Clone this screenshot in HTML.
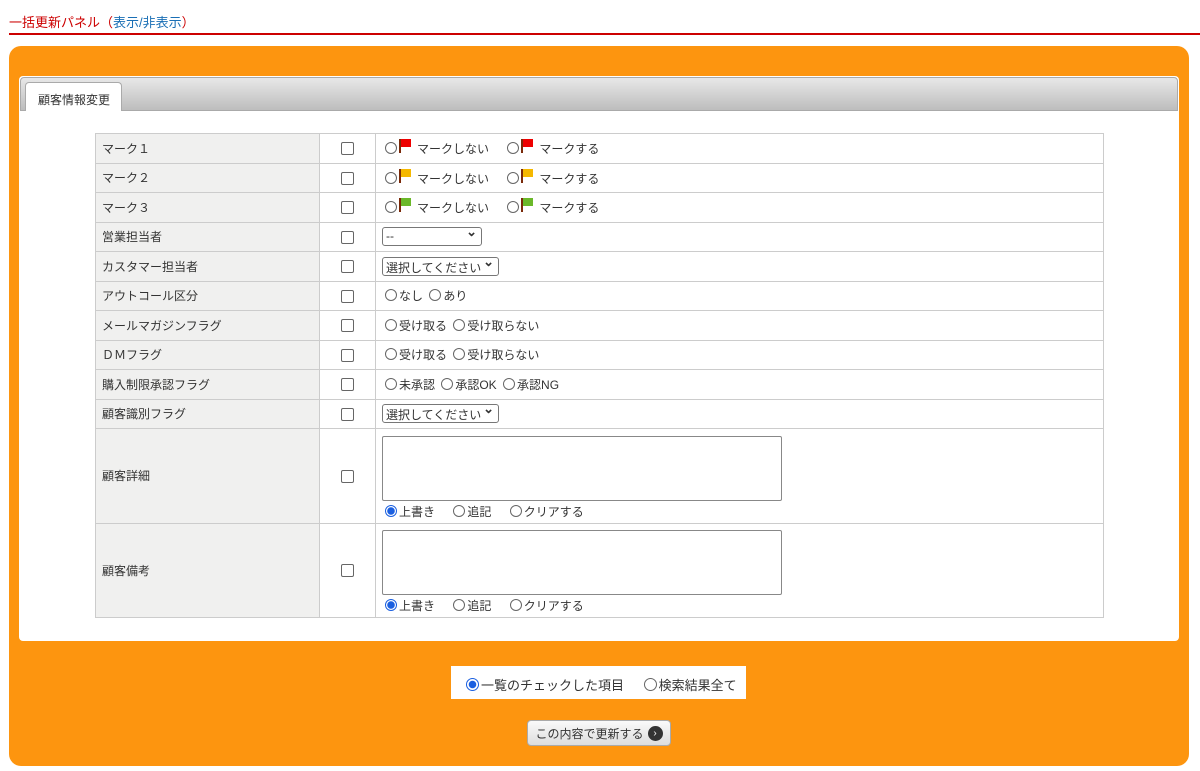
<!DOCTYPE html>
<html><head><meta charset="utf-8"><style>
*{box-sizing:border-box}
body{margin:0;width:1200px;height:771px;background:#fff;font-family:"Liberation Sans","Noto Sans CJK JP",sans-serif;font-size:12px;color:#333;position:relative;overflow:hidden}
.title{position:absolute;left:9px;top:12px;font-size:13px;color:#c00}
.title span{color:#1a6fb5}
.line{position:absolute;left:9px;top:33px;width:1191px;height:2px;background:#c00}
.orange{position:absolute;left:9px;top:46px;width:1180px;height:720px;background:#fd950f;border-radius:12px}
.panel{position:absolute;left:19px;top:76px;width:1160px;height:565px;background:#fff;border-radius:4px}
.tabbar{position:absolute;left:1px;top:1px;width:1158px;height:34px;background:linear-gradient(#e8e8e8,#bdbdbd);border:1px solid #aaa;border-radius:4px 4px 0 0}
.tab{position:absolute;left:6px;top:6px;width:97px;height:29px;background:#fff;border:1px solid #aaa;border-bottom:none;border-radius:4px 4px 0 0;padding:8px 0 0 12px;font-size:12px}
table{position:absolute;left:76px;top:57px;width:1009px;border-collapse:collapse}
td{border:1px solid #ccc;height:29.5px;padding:0 6px;vertical-align:middle;white-space:nowrap}
td.l{width:224px;background:#f0f0ef}
td.c{width:56px;text-align:center}
.cb{display:inline-block;width:13px;height:13px;border:1px solid #666;border-radius:2px;vertical-align:middle}
.r{display:inline-block;width:12px;height:12px;border:1px solid #666;border-radius:50%;vertical-align:-1px;margin:0 2px 0 3px}
.r.on{border:1px solid #1a5fe0;background:radial-gradient(#1a5fe0 0 3.5px,#fff 4px)}
.f{display:inline-block;width:12px;height:14px;vertical-align:0;position:relative;margin-right:6px}
.f:before{content:"";position:absolute;left:0;top:0;width:2px;height:14px;background:#7a2a0a}
.f:after{content:"";position:absolute;left:2px;top:0;width:10px;height:8px;background:var(--c)}
.sel{display:inline-block;height:19px;border:1px solid #777;border-radius:3px;padding:1px 3px;font-size:12px;vertical-align:middle;position:relative;background:#fff}
.sel:after{content:"⌄";position:absolute;right:4px;top:-4px;font-weight:bold;font-size:13px}
.ta{width:400px;height:65px;border:1px solid #888;border-radius:2px;margin:4px 0 2px}
.opt{position:absolute;left:451px;top:666px;width:295px;height:33px;background:#fff;font-size:13px;padding:9px 0 0 12px;white-space:nowrap}
.btn{position:absolute;left:527px;top:720px;width:144px;height:26px;background:linear-gradient(#fafafa,#ddd);border:1px solid #aaa;border-radius:4px;font-size:12px;display:flex;align-items:center;justify-content:center;white-space:nowrap}
.btn i{display:block;width:15px;height:15px;border-radius:50%;background:#333;color:#fff;font-style:normal;font-size:10px;text-align:center;line-height:15px;margin-left:4px;flex:none}
</style></head><body>
<div class="title">一括更新パネル（<span>表示/非表示</span>）</div>
<div class="line"></div>
<div class="orange"></div>
<div class="panel">
<div class="tabbar"></div>
<div class="tab">顧客情報変更</div>
<table>
<tr><td class="l">マーク１</td><td class="c"><span class="cb"></span></td><td><span class="r"></span><span class="f" style="--c:#e00"></span>マークしない　 <span class="r"></span><span class="f" style="--c:#e00"></span>マークする</td></tr>
<tr><td class="l">マーク２</td><td class="c"><span class="cb"></span></td><td><span class="r"></span><span class="f" style="--c:#f5b800"></span>マークしない　 <span class="r"></span><span class="f" style="--c:#f5b800"></span>マークする</td></tr>
<tr><td class="l">マーク３</td><td class="c"><span class="cb"></span></td><td><span class="r"></span><span class="f" style="--c:#6bb82a"></span>マークしない　 <span class="r"></span><span class="f" style="--c:#6bb82a"></span>マークする</td></tr>
<tr><td class="l">営業担当者</td><td class="c"><span class="cb"></span></td><td><span class="sel" style="width:100px">--</span></td></tr>
<tr><td class="l">カスタマー担当者</td><td class="c"><span class="cb"></span></td><td><span class="sel" style="width:117px">選択してください</span></td></tr>
<tr><td class="l">アウトコール区分</td><td class="c"><span class="cb"></span></td><td><span class="r"></span>なし <span class="r"></span>あり</td></tr>
<tr><td class="l">メールマガジンフラグ</td><td class="c"><span class="cb"></span></td><td><span class="r"></span>受け取る <span class="r"></span>受け取らない</td></tr>
<tr><td class="l">ＤＭフラグ</td><td class="c"><span class="cb"></span></td><td><span class="r"></span>受け取る <span class="r"></span>受け取らない</td></tr>
<tr><td class="l">購入制限承認フラグ</td><td class="c"><span class="cb"></span></td><td><span class="r"></span>未承認 <span class="r"></span>承認OK <span class="r"></span>承認NG</td></tr>
<tr><td class="l">顧客識別フラグ</td><td class="c"><span class="cb"></span></td><td><span class="sel" style="width:117px">選択してください</span></td></tr>
<tr><td class="l" style="height:94.5px">顧客詳細</td><td class="c"><span class="cb"></span></td><td><div class="ta"></div><span class="r on"></span>上書き　 <span class="r"></span>追記　 <span class="r"></span>クリアする</td></tr>
<tr><td class="l" style="height:94.5px">顧客備考</td><td class="c"><span class="cb"></span></td><td><div class="ta"></div><span class="r on"></span>上書き　 <span class="r"></span>追記　 <span class="r"></span>クリアする</td></tr>
</table>
</div>
<div class="opt"><span class="r on" style="width:13px;height:13px"></span>一覧のチェックした項目　 <span class="r" style="width:13px;height:13px"></span>検索結果全て</div>
<div class="btn">この内容で更新する<i>›</i></div>
</body></html>
